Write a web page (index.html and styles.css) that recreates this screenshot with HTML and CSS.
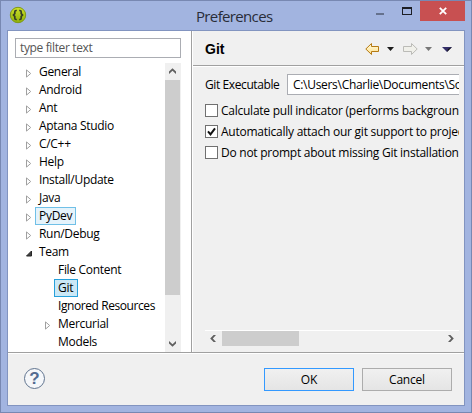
FILE: index.html
```html
<!DOCTYPE html>
<html lang="en">
<head>
<meta charset="utf-8">
<title>Preferences</title>
<link rel="stylesheet" href="styles.css">
</head>
<body>
<div class="window">
  <header class="titlebar">
    <svg class="app-icon" width="18" height="18" viewBox="0 0 18 18"><defs><linearGradient id="g" x2="0" y2="1"><stop stop-color="#d0e22a"/><stop offset="1" stop-color="#8fb008"/></linearGradient></defs><circle cx="9" cy="9" r="7.7" fill="url(#g)" stroke="#7d9819"/><path d="M7.8 4.500H7Q5.800 4.500 5.800 6v1.600L4.500 9l1.300 1.400V12q0 1.500 1.200 1.500h.8M10.200 4.500h.8q1.200 0 1.200 1.500v1.600L13.500 9l-1.300 1.400V12q0 1.500-1.200 1.500h-.8" fill="none" stroke="#343d25" stroke-width="1.7"/></svg>
    <h1 class="title">Preferences</h1>
    <div class="controls">
      <svg width="44" height="20" viewBox="0 0 44 20" shape-rendering="crispEdges"><path d="M0 12h8v2H0z" fill="#65718d"/><path d="M26 6h10v8H26zM27 8v5h8V8z" fill="#1c1e25" fill-rule="evenodd"/></svg>
      <div class="close"><svg width="8" height="8" viewBox="0 0 8 8"><path d="M.8.8l6.400 6.400M7.200.8L.8 7.200" stroke="#fff" stroke-width="1.8"/></svg></div>
    </div>
  </header>
  <main class="client">
    <div class="panes">
      <aside class="sidebar">
        <div class="filter">type filter text</div>
        <div class="tree-wrap">
          <ul class="tree">
            <li><svg class="tw" viewBox="0 0 6 9"><path d="M.5.9v7.200L4.700 4.500z"/></svg><span>General</span></li>
            <li><svg class="tw" viewBox="0 0 6 9"><path d="M.5.9v7.200L4.700 4.500z"/></svg><span>Android</span></li>
            <li><svg class="tw" viewBox="0 0 6 9"><path d="M.5.9v7.200L4.700 4.500z"/></svg><span>Ant</span></li>
            <li><svg class="tw" viewBox="0 0 6 9"><path d="M.5.9v7.200L4.700 4.500z"/></svg><span>Aptana Studio</span></li>
            <li><svg class="tw" viewBox="0 0 6 9"><path d="M.5.9v7.200L4.700 4.500z"/></svg><span>C/C++</span></li>
            <li><svg class="tw" viewBox="0 0 6 9"><path d="M.5.9v7.200L4.700 4.500z"/></svg><span>Help</span></li>
            <li><svg class="tw" viewBox="0 0 6 9"><path d="M.5.9v7.200L4.700 4.500z"/></svg><span>Install/Update</span></li>
            <li><svg class="tw" viewBox="0 0 6 9"><path d="M.5.9v7.200L4.700 4.500z"/></svg><span>Java</span></li>
            <li><svg class="tw" viewBox="0 0 6 9"><path d="M.5.9v7.200L4.700 4.500z"/></svg><span class="hover">PyDev</span></li>
            <li><svg class="tw" viewBox="0 0 6 9"><path d="M.5.9v7.200L4.700 4.500z"/></svg><span>Run/Debug</span></li>
            <li><svg class="tw open" viewBox="0 0 6 9"><path d="M5.500 2v5H.5z"/></svg><span>Team</span></li>
            <li class="child leaf"><span>File Content</span></li>
            <li class="child leaf"><span class="selected">Git</span></li>
            <li class="child leaf"><span class="tight">Ignored Resources</span></li>
            <li class="child"><svg class="tw" viewBox="0 0 6 9"><path d="M.5.9v7.200L4.700 4.500z"/></svg><span>Mercurial</span></li>
            <li class="child leaf"><span>Models</span></li>
          </ul>
          <div class="vscroll">
            <svg width="15" height="17" viewBox="0 0 15 17"><path d="M4 11V8.600L7.500 5.200L11 8.600V11L7.500 7.800z" fill="#606060"/></svg>
            <div class="vthumb"></div>
            <svg class="down" width="15" height="17" viewBox="0 0 15 17"><path d="M4 6v2.400L7.500 11.800L11 8.400V6L7.500 9.200z" fill="#606060"/></svg>
          </div>
        </div>
      </aside>
      <section class="page">
        <div class="page-head">
          <h2>Git</h2>
          <svg width="88" height="16" viewBox="0 0 88 16"><defs><linearGradient id="y" x2="0" y2="1"><stop stop-color="#fffbe0"/><stop offset="1" stop-color="#ffe08a"/></linearGradient></defs><path d="M.8 8L6.500 2.500V5.500H13.500V10.500H6.500V13.500z" fill="url(#y)" stroke="#b57a13"/><path d="M22 6h7l-3.500 4z" fill="#1c1c1c"/><path d="M52.200 8L46.500 2.500V5.500H38.500V10.500H46.500V13.500z" fill="#f0f0ea" stroke="#bbbbb7"/><path d="M60 6h7l-3.500 4z" fill="#777"/><path d="M77 6h10l-5 5z" fill="#332e68"/><path d="M87 6l-5 5 1-3z" fill="#111"/></svg>
        </div>
        <div class="page-body">
          <div class="field-row"><label>Git Executable</label><div class="path">C:\Users\Charlie\Documents\So</div></div>
          <div class="check"><i></i><span>Calculate pull indicator (performs backgroun</span></div>
          <div class="check"><i><svg width="11" height="11" viewBox="0 0 11 11"><path d="M2 5.300l2.500 3L9 2.300" fill="none" stroke="#111" stroke-width="2"/></svg></i><span>Automatically attach our git support to projec</span></div>
          <div class="check"><i></i><span>Do not prompt about missing Git installation</span></div>
          <div class="hscroll">
            <svg width="17" height="15" viewBox="0 0 17 15"><path d="M11 4H8.600L5.200 7.500L8.600 11H11L7.800 7.500z" fill="#606060"/></svg>
            <div class="hthumb"></div>
            <svg class="right" width="17" height="15" viewBox="0 0 17 15"><path d="M6 4h2.400L11.800 7.500L8.400 11H6L9.200 7.500z" fill="#606060"/></svg>
          </div>
        </div>
      </section>
    </div>
    <footer class="footer">
      <div class="help">?</div>
      <button class="ok">OK</button>
      <button>Cancel</button>
    </footer>
  </main>
</div>
</body>
</html>
```
FILE: styles.css
```css
* { box-sizing: border-box; }
body { margin: 0; overflow: hidden; font: 12px/18px "Open Sans", "Noto Sans", sans-serif; letter-spacing: -0.3px; color: #000; }
svg { display: block; flex: none; }
.window { width: 472px; height: 413px; background: #a2b4e0; border: 1px solid #7888b2; padding: 0 6px 6px; display: flex; flex-direction: column; }
.titlebar { height: 29px; display: flex; align-items: flex-start; }
.app-icon { margin: 5px 0 0 2px; }
.title { margin: 4px 0 0 169px; font-size: 15px; line-height: 22px; font-weight: 400; letter-spacing: -0.65px; color: #292d38; }
.controls { display: flex; margin-left: auto; }
.close { width: 45px; height: 20px; background: #c85051; display: flex; align-items: center; justify-content: center; }
.client { flex: 1; border: 1px solid #8294c0; background: #f0f0f0; display: flex; flex-direction: column; min-height: 0; }
.panes { height: 323px; display: flex; border-bottom: 1px solid #fff; box-shadow: inset 0 -1px #a0a0a0; padding-bottom: 1px; }
.sidebar { width: 185px; background: #fff; border-right: 1px solid #fff; box-shadow: inset -1px 0 #a0a0a0; padding: 7px 10px 0 7px; flex: none; }
.filter { width: 166px; height: 20px; border: 1px solid #abadb3; line-height: 18px; padding-left: 4px; color: #555; letter-spacing: -0.36px; }
.tree-wrap { display: flex; margin-top: 5px; height: 289px; width: 166px; overflow: hidden; }
.tree { list-style: none; margin: 0; padding: 0; width: 150px; flex: none; }
.tree li { height: 18px; display: flex; align-items: center; padding-left: 11px; }
.tree li.child { padding-left: 30px; }
.tree li.leaf { padding-left: 39px; }
.tree span { height: 18px; line-height: 16px; padding: 0 3px; border: 1px solid transparent; margin-left: 3px; white-space: nowrap; }
.tree .leaf span { margin-left: 0; }
.tree .tight { letter-spacing: -0.42px; }
.tree .hover { background: #e5f3fb; border-color: #70c0e7; }
.tree .selected { background: #cbe8f6; border-color: #26a0da; padding-right: 4px; }
.tw { width: 6px; height: 9px; margin-top: 2px; }
.tw path { fill: #fff; stroke: #a0a0a0; }
.tw.open path { fill: #404040; stroke: #262626; }
.vscroll { width: 16px; background: #f0f0f0; display: flex; flex-direction: column; }
.vthumb { width: 15px; height: 215px; background: #cdcdcd; }
.down { margin-top: auto; }
.page { flex: 1; min-width: 0; display: flex; flex-direction: column; }
.page-head { height: 36px; border-bottom: 1px solid #fff; box-shadow: inset 0 -1px #a0a0a0; display: flex; justify-content: space-between; padding: 10px 11px 0 12px; }
h2 { margin: 0; font: bold 14px/17px "Liberation Sans", Arial, sans-serif; letter-spacing: 0; }
.page-body { flex: 1; padding: 7px 5px 6px 12px; display: flex; flex-direction: column; min-height: 0; }
.field-row { height: 21px; display: flex; align-items: center; overflow: hidden; margin-bottom: 5px; }
.field-row label { width: 82px; flex: none; white-space: nowrap; letter-spacing: -0.4px; }
.path { flex: 1; height: 21px; line-height: 19px; background: #fff; border: 1px solid #abadb3; border-right: 0; padding-left: 5px; white-space: nowrap; overflow: hidden; }
.check { height: 21px; display: flex; align-items: center; overflow: hidden; white-space: nowrap; letter-spacing: -0.25px; }
.check i { width: 13px; height: 13px; flex: none; background: #fff; border: 1px solid #707070; margin-right: 3px; }
.hscroll { margin-top: auto; height: 16px; border-top: 1px solid #fff; display: flex; }
.hthumb { width: 77px; background: #cdcdcd; }
.right { margin-left: auto; }
.footer { flex: 1; display: flex; align-items: flex-start; padding: 14px 12px 0 16px; }
.help { width: 21px; height: 21px; border: 1.5px solid #60748f; border-radius: 50%; color: #526b91; background: #f5f7fa; font: bold 17px/19px "Liberation Sans", Arial, sans-serif; letter-spacing: 0; text-align: center; }
button { width: 90px; height: 23px; margin-left: 8px; padding: 0; border: 1px solid #acacac; background: linear-gradient(#f0f0f0, #e5e5e5); font: inherit; letter-spacing: -0.2px; color: #000; line-height: 20px; }
.ok { margin-left: auto; border-color: #3399ff; }
```
